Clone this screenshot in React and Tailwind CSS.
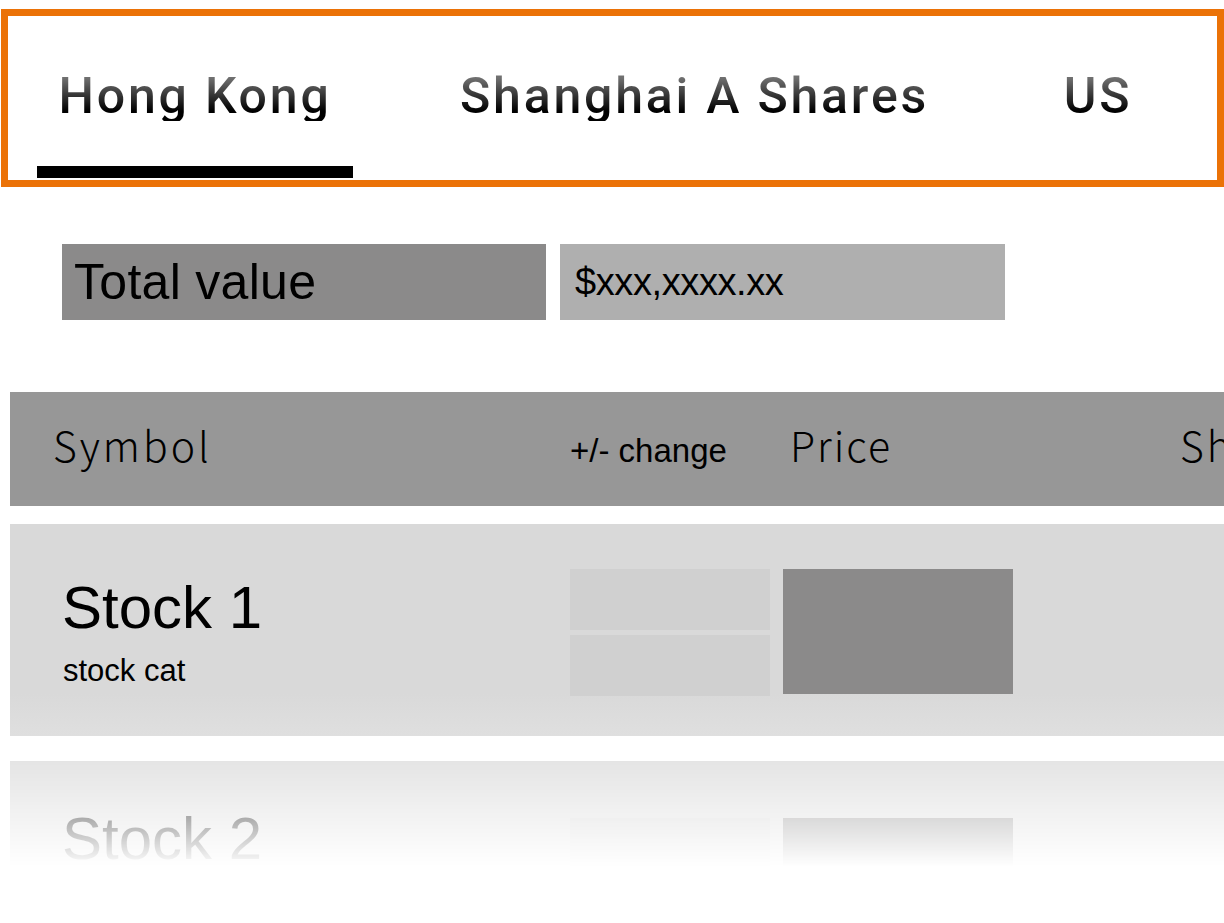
function Tab({ label, widthClass, active }) {
  return (
    <div className={`flex flex-col items-center pt-[55px] ${widthClass}`}>
      <span className="h-[50px] whitespace-nowrap bg-[linear-gradient(to_bottom,#707070_14%,#000000_80%)] bg-clip-text font-['Roboto','Liberation_Sans',sans-serif] text-[50px] font-medium leading-[50px] tracking-[2.8px] text-transparent">
        {label}
      </span>
      <div className={`mt-[45px] h-[12px] w-full ${active ? "bg-black" : "bg-transparent"}`} />
    </div>
  );
}

function StockRow({ name, cat, faded }) {
  return (
    <div
      className={
        faded
          ? "mt-[25px] ml-[10px] flex h-[212px] bg-[#d9d9d9] [mask-image:linear-gradient(to_bottom,rgba(0,0,0,0.7),transparent_106px)]"
          : "mt-[18px] ml-[10px] flex h-[212px] bg-[linear-gradient(to_bottom,#d9d9d9_80%,#dfdfdf)]"
      }
    >
      <div className={`flex w-[560px] flex-col pl-[52px] ${faded ? "pt-[48px]" : "pt-[54px]"}`}>
        <span className="text-[60px] leading-[60px] text-black">{name}</span>
        <span className="mt-[17px] pl-[1px] text-[31px] leading-[31px] text-black">{cat}</span>
      </div>
      <div className={`flex w-[200px] flex-col gap-[5px] ${faded ? "pt-[57px]" : "pt-[45px]"}`}>
        <div className="h-[61px] bg-[#d0d0d0]" />
        <div className="h-[61px] bg-[#d0d0d0]" />
      </div>
      <div className={`ml-[13px] ${faded ? "pt-[57px]" : "pt-[45px]"}`}>
        <div className="h-[125px] w-[230px] bg-[#8b8a8a]" />
      </div>
    </div>
  );
}

export default function App() {
  return (
    <div className="h-[923px] w-[1224px] overflow-hidden bg-white font-['Liberation_Sans',Arial,sans-serif]">
      {/* Market tabs */}
      <div className="mt-[9px] ml-[1px] flex h-[178px] w-[1223px] border-[7px] border-[#eb7207] pl-[29px]">
        <Tab label="Hong Kong" widthClass="w-[316px]" active />
        <Tab label="Shanghai A Shares" widthClass="w-[683px]" />
        <Tab label="US" widthClass="w-[124px]" />
      </div>

      {/* Total value */}
      <div className="mt-[57px] flex gap-[14px] pl-[62px]">
        <div className="flex h-[76px] w-[484px] items-center bg-[#8b8a8a] pl-[12px] text-[50px] leading-none tracking-[0.3px] text-black">
          Total value
        </div>
        <div className="flex h-[76px] w-[445px] items-center bg-[#afafaf] pl-[15px] text-[38px] leading-none tracking-[-0.4px] text-black">
          $xxx,xxxx.xx
        </div>
      </div>

      {/* Table header */}
      <div className="mt-[72px] ml-[10px] flex h-[114px] items-baseline overflow-hidden whitespace-nowrap bg-[#979797] pt-[32px] pl-[43px] text-black">
        <span className="w-[517px] shrink-0 font-['Noto_Sans_CJK_JP','Noto_Sans',sans-serif] text-[41px] font-light leading-none tracking-[3px]">
          Symbol
        </span>
        <span className="w-[220px] shrink-0 text-[33px] leading-none">+/- change</span>
        <span className="w-[390px] shrink-0 font-['Noto_Sans_CJK_JP','Noto_Sans',sans-serif] text-[41px] font-light leading-none tracking-[2px]">
          Price
        </span>
        <span className="shrink-0 font-['Noto_Sans_CJK_JP','Noto_Sans',sans-serif] text-[41px] font-light leading-none tracking-[3px]">
          Shares
        </span>
      </div>

      {/* Rows */}
      <StockRow name="Stock 1" cat="stock cat" />
      <StockRow name="Stock 2" cat="stock cat" faded />
    </div>
  );
}
